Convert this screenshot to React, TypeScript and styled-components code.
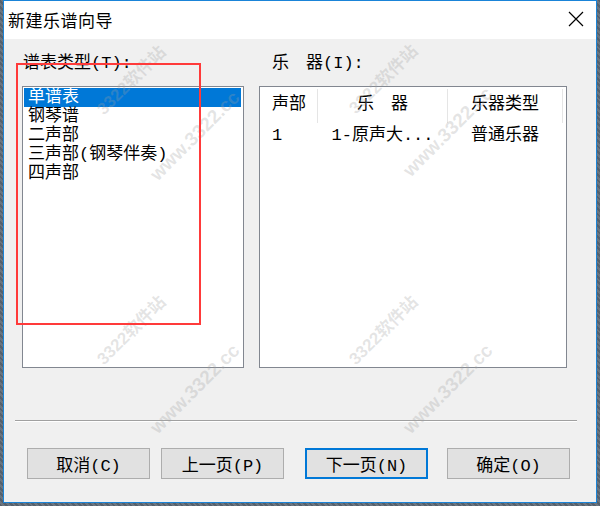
import styled, { createGlobalStyle } from 'styled-components';

const GlobalStyle = createGlobalStyle`
  html, body {
    margin: 0;
    padding: 0;
    background: #5f6a74;
  }
  body {
    font-family: "Liberation Mono", "Noto Sans CJK SC", monospace;
  }
`;

const Desktop = styled.div`
  width: 600px;
  height: 506px;
  padding-left: 3px;
  box-sizing: border-box;
  background: repeating-linear-gradient(45deg, #56616c 0 2px, #6b7580 2px 4px);
  overflow: hidden;
`;

const Window = styled.div`
  position: relative;
  width: 594px;
  height: 503px;
  box-sizing: border-box;
  border: 1px solid #1a84d8;
  background: #f0f0f0;
  display: flex;
  flex-direction: column;
  overflow: hidden;
`;

const TitleBar = styled.div`
  height: 36px;
  background: #ffffff;
  display: flex;
  align-items: center;
  justify-content: space-between;
  padding: 0 12px 2px 4px;
`;

const Title = styled.div`
  font-family: "Noto Sans CJK SC", sans-serif;
  font-size: 17px;
  letter-spacing: 0.5px;
  color: #000;
`;

const CloseButton = styled.div`
  width: 16px;
  height: 16px;
  display: flex;
  align-items: center;
  justify-content: center;
`;

const Body = styled.div`
  flex: 1;
  display: flex;
  flex-direction: column;
  padding: 15px 0 0 18px;
`;

const Columns = styled.div`
  display: grid;
  grid-template-columns: 222px 308px;
  column-gap: 15px;
`;

const Column = styled.div`
  display: flex;
  flex-direction: column;
`;

const Label = styled.div<{ $indent: number }>`
  font-size: 17px;
  line-height: 20px;
  height: 20px;
  color: #000;
  padding-left: ${(p) => p.$indent}px;
  margin-bottom: 12px;
  white-space: pre;
`;

const Box = styled.div`
  height: 282px;
  box-sizing: border-box;
  border: 1px solid #828790;
  background: #ffffff;
`;

const List = styled.div`
  padding: 1px 2px 0 1px;
  display: flex;
  flex-direction: column;
`;

const Item = styled.div<{ $selected?: boolean }>`
  height: 19px;
  line-height: 19px;
  font-size: 17px;
  padding-left: 4px;
  white-space: nowrap;
  color: ${(p) => (p.$selected ? '#ffffff' : '#000000')};
  background: ${(p) => (p.$selected ? '#0078d7' : 'transparent')};
`;

const Row = styled.div<{ $head?: boolean }>`
  display: grid;
  grid-template-columns: 58px 130px 115px;
  height: ${(p) => (p.$head ? 36 : 26)}px;
`;

const Cell = styled.div<{ $align: 'left' | 'center'; $head?: boolean }>`
  font-size: 17px;
  line-height: 20px;
  white-space: pre;
  display: flex;
  align-items: center;
  justify-content: ${(p) => (p.$align === 'left' ? 'flex-start' : 'center')};
  padding-left: ${(p) => (p.$align === 'left' ? 12 : 0)}px;
  padding-bottom: ${(p) => (p.$head ? 3 : 0)}px;
  color: #000;
  border-right: ${(p) => (p.$head ? '1px solid #e5e5e5' : '1px solid transparent')};
  margin-top: ${(p) => (p.$head ? 2 : 0)}px;
`;

const Separator = styled.div`
  margin: 52px 0 0 -7px;
  width: 562px;
  height: 1px;
  background: #a0a0a0;
  border-bottom: 1px solid #ffffff;
`;

const ButtonRow = styled.div`
  display: flex;
  margin: 26px 0 0 5px;
`;

const Button = styled.div<{ $before: number; $default?: boolean }>`
  width: 123px;
  height: 31px;
  box-sizing: border-box;
  margin-left: ${(p) => p.$before}px;
  border: ${(p) => (p.$default ? '2px solid #0078d7' : '1px solid #adadad')};
  background: #e1e1e1;
  display: flex;
  align-items: center;
  justify-content: center;
  font-size: 17px;
  color: #000;
`;

const Mark = styled.div<{ $x: number; $y: number; $size: number }>`
  position: absolute;
  left: ${(p) => p.$x}px;
  top: ${(p) => p.$y}px;
  transform: translate(-50%, -50%) rotate(-45deg);
  font-family: "Liberation Sans", "Noto Sans CJK SC", sans-serif;
  font-weight: bold;
  font-size: ${(p) => p.$size}px;
  color: rgba(160, 160, 160, 0.28);
  white-space: nowrap;
  pointer-events: none;
`;

const Highlight = styled.div`
  position: absolute;
  left: 12px;
  top: 62px;
  width: 185px;
  height: 262px;
  box-sizing: border-box;
  border: 2px solid #ff3a3a;
  pointer-events: none;
`;

const staves = ['单谱表', '钢琴谱', '二声部', '三声部(钢琴伴奏)', '四声部'];

const marks = [
  { x: 126, y: 78, text: '3322软件站', size: 17 },
  { x: 191, y: 135, text: 'www.3322.cc', size: 19 },
  { x: 378, y: 77, text: '3322软件站', size: 17 },
  { x: 444, y: 131, text: 'www.3322.cc', size: 19 },
  { x: 126, y: 328, text: '3322软件站', size: 17 },
  { x: 191, y: 388, text: 'www.3322.cc', size: 19 },
  { x: 378, y: 328, text: '3322软件站', size: 17 },
  { x: 444, y: 388, text: 'www.3322.cc', size: 19 },
];

export default function App() {
  return (
    <Desktop>
      <GlobalStyle />
      <Window>
        <TitleBar>
          <Title>新建乐谱向导</Title>
          <CloseButton>
            <svg width="16" height="16" viewBox="0 0 16 16">
              <path d="M1 1 L15 15 M15 1 L1 15" stroke="#000" strokeWidth="1.2" />
            </svg>
          </CloseButton>
        </TitleBar>
        <Body>
          <Columns>
            <Column>
              <Label $indent={1}>谱表类型(T):</Label>
              <Box>
                <List>
                  {staves.map((s, i) => (
                    <Item key={s} $selected={i === 0}>{s}</Item>
                  ))}
                </List>
              </Box>
            </Column>
            <Column>
              <Label $indent={13}>乐　器(I):</Label>
              <Box>
                <Row $head>
                  <Cell $align="left" $head>声部</Cell>
                  <Cell $align="center" $head>乐　器</Cell>
                  <Cell $align="center" $head>乐器类型</Cell>
                </Row>
                <Row>
                  <Cell $align="left">1</Cell>
                  <Cell $align="center">1-原声大...</Cell>
                  <Cell $align="center">普通乐器</Cell>
                </Row>
              </Box>
            </Column>
          </Columns>
          <Separator />
          <ButtonRow>
            <Button $before={0}>取消(C)</Button>
            <Button $before={11}>上一页(P)</Button>
            <Button $before={21} $default>下一页(N)</Button>
            <Button $before={19}>确定(O)</Button>
          </ButtonRow>
        </Body>
        {marks.map((m, i) => (
          <Mark key={i} $x={m.x} $y={m.y} $size={m.size}>{m.text}</Mark>
        ))}
        <Highlight />
      </Window>
    </Desktop>
  );
}
